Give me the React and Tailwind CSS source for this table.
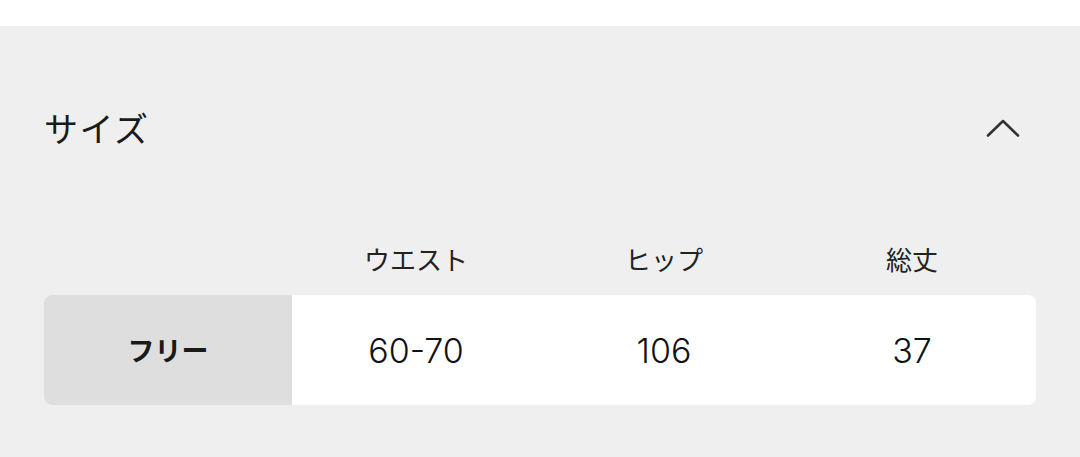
import React from 'react';

const headers = ['ウエスト', 'ヒップ', '総丈'];
const rows = [{ label: 'フリー', values: ['60-70', '106', '37'] }];

export default function App() {
  return (
    <div className="w-[1080px] h-[457px] bg-white font-['Noto_Sans_CJK_JP',sans-serif] text-[#1a1a1a] overflow-hidden">
      <div className="h-[26px] bg-white" />
      <div className="h-[431px] bg-[#efefef] px-[44px]">
        {/* 見出し */}
        <div className="flex items-center justify-between h-[204px]">
          <h2 className="text-[34px] leading-none tracking-[1.5px]">サイズ</h2>
          <svg width="34" height="20" viewBox="0 0 34 20" className="mr-[16px]" fill="none">
            <path d="M2 17.5 L17 3 L32 17.5" stroke="#333" strokeWidth="2.6" strokeLinecap="round" strokeLinejoin="round" />
          </svg>
        </div>

        {/* 表 */}
        <div className="grid grid-cols-4 h-[65px] pb-[8px] items-center text-[26px] leading-none text-[#222]">
          <div />
          {headers.map((h) => (
            <div key={h} className="text-center">{h}</div>
          ))}
        </div>
        {rows.map((r) => (
          <div key={r.label} className="grid grid-cols-4 h-[110px] rounded-[8px] overflow-hidden bg-white">
            <div className="bg-[#dedede] flex items-center justify-center text-[27px] font-bold">{r.label}</div>
            {r.values.map((v, i) => (
              <div key={i} className="flex items-center justify-center text-[34px] font-['Inter',sans-serif] font-light text-[#111]">{v}</div>
            ))}
          </div>
        ))}
      </div>
    </div>
  );
}
